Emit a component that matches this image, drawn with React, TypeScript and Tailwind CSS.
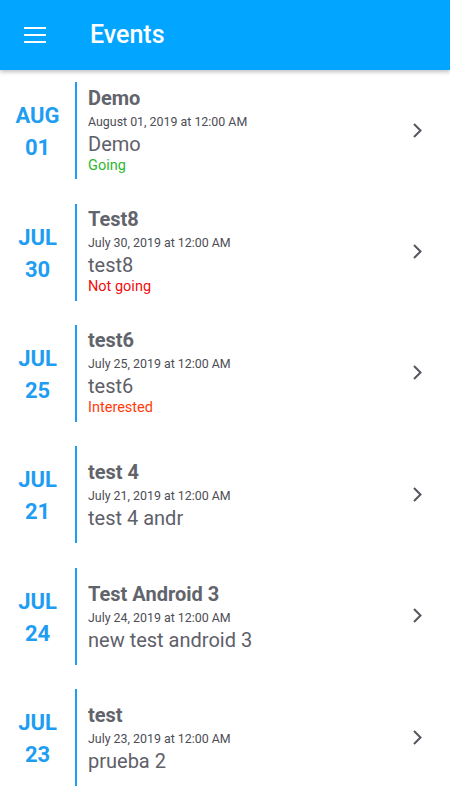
import React from "react";

type EventItem = {
  month: string;
  day: string;
  title: string;
  when: string;
  desc: string;
  status?: "Going" | "Not going" | "Interested";
};

const events: EventItem[] = [
  { month: "AUG", day: "01", title: "Demo", when: "August 01, 2019 at 12:00 AM", desc: "Demo", status: "Going" },
  { month: "JUL", day: "30", title: "Test8", when: "July 30, 2019 at 12:00 AM", desc: "test8", status: "Not going" },
  { month: "JUL", day: "25", title: "test6", when: "July 25, 2019 at 12:00 AM", desc: "test6", status: "Interested" },
  { month: "JUL", day: "21", title: "test 4", when: "July 21, 2019 at 12:00 AM", desc: "test 4 andr" },
  { month: "JUL", day: "24", title: "Test Android 3", when: "July 24, 2019 at 12:00 AM", desc: "new test android 3" },
  { month: "JUL", day: "23", title: "test", when: "July 23, 2019 at 12:00 AM", desc: "prueba 2" },
];

const statusColor = {
  Going: "text-[#2eb82e]",
  "Not going": "text-[#f20d0d]",
  Interested: "text-[#ff3a0a]",
};

const App = () => {
  return (
    <div className="w-[450px] h-[800px] overflow-hidden bg-white font-['Roboto',sans-serif]">
      <header className="h-[70px] bg-[#02a5ff] flex items-center shadow-[0_2px_4px_rgba(0,0,0,0.25)] relative z-10">
        <svg width="24" height="24" viewBox="0 0 24 24" className="ml-[23px]">
          <path d="M1 5h22M1 12h22M1 19h22" stroke="white" strokeWidth="2.2" />
        </svg>
        <h1 className="ml-[43px] text-white text-[25px] font-medium">Events</h1>
      </header>

      <div className="flex flex-col">
        {events.map((ev, index) => {
          return (
            <div key={index} className="h-[121.4px] flex items-center">
              <div className="w-[75px] pt-[3px] flex flex-col items-center text-[#1f9df2] font-bold text-[22px] leading-[32px]">
                <span>{ev.month}</span>
                <span>{ev.day}</span>
              </div>
              <div className="h-[97px] w-[2px] bg-[#1f9df2]" />
              <div className="flex-1 pl-[11px] flex flex-col justify-center text-[#5e6069]">
                <span className="font-bold text-[20px] leading-[24px] text-[#62646c]">{ev.title}</span>
                <span className="mt-[1px] text-[12.4px] leading-[22px] text-[#4c4d55]">{ev.when}</span>
                <span className="text-[20px] leading-[22px]">{ev.desc}</span>
                {ev.status && (
                  <span className={`mt-[1px] text-[14.5px] leading-[20px] ${statusColor[ev.status]}`}>
                    {ev.status}
                  </span>
                )}
              </div>
              <svg width="16" height="16" viewBox="0 0 16 16" className="mr-[25px]">
                <path d="M5 1L11.5 7.5L5 14" stroke="#55565e" strokeWidth="2" fill="none" />
              </svg>
            </div>
          );
        })}
      </div>
    </div>
  );
};

export default App;
